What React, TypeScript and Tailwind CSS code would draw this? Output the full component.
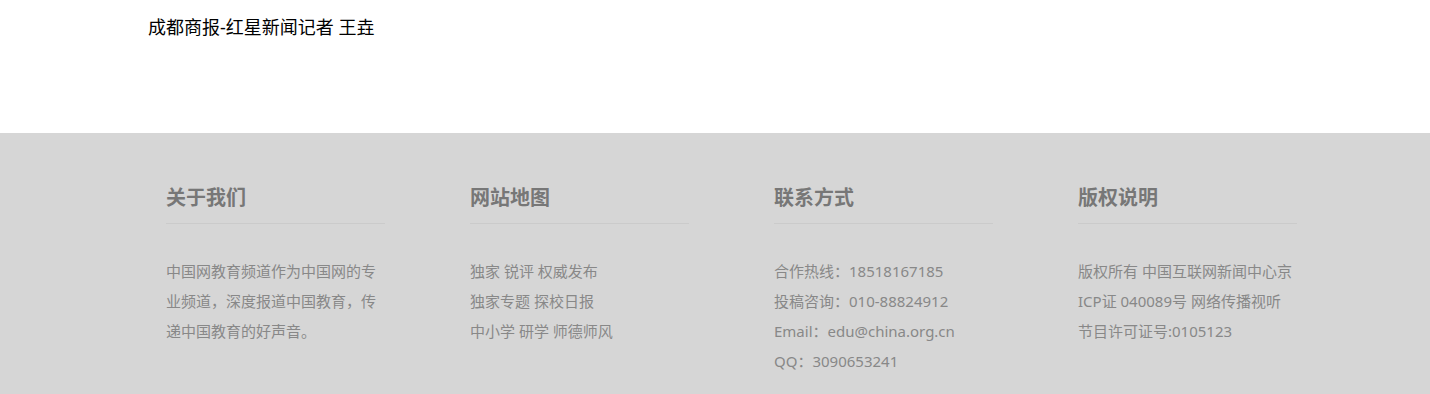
import React from "react";

const font = { fontFamily: '"Noto Sans", "Noto Sans CJK SC", sans-serif' };

function Col({ title, children }: { title: string; children: React.ReactNode }) {
  return (
    <div className="w-[219px]">
      <h3 className="text-[20px] leading-[30px] font-bold text-[#777] pb-[10px] border-b border-[#cbcbcb]">{title}</h3>
      <div className="mt-[32px] text-[15px] leading-[30px] text-[#888]">{children}</div>
    </div>
  );
}

export default function App() {
  return (
    <div className="bg-white" style={font}>
      <div className="h-[133px] pl-[148px] pt-[15px] text-[18px] leading-[24px] text-black">
        成都商报-红星新闻记者 王垚
      </div>
      <div className="bg-[#d6d6d6] pt-[50px] pb-[40px] pl-[166px]">
        <div className="grid grid-cols-[304px_304px_304px_304px]">
          <Col title="关于我们">
            <p>中国网教育频道作为中国网的专业频道，深度报道中国教育，传递中国教育的好声音。</p>
          </Col>
          <Col title="网站地图">
            <p>独家 锐评 权威发布</p>
            <p>独家专题 探校日报</p>
            <p>中小学 研学 师德师风</p>
          </Col>
          <Col title="联系方式">
            <p>合作热线：18518167185</p>
            <p>投稿咨询：010-88824912</p>
            <p>Email：edu@china.org.cn</p>
            <p>QQ：3090653241</p>
          </Col>
          <Col title="版权说明">
            <p>
              版权所有 中国互联网新闻中心京
              <br />
              ICP证 040089号 网络传播视听
              <br />
              节目许可证号:0105123
            </p>
          </Col>
        </div>
      </div>
    </div>
  );
}
